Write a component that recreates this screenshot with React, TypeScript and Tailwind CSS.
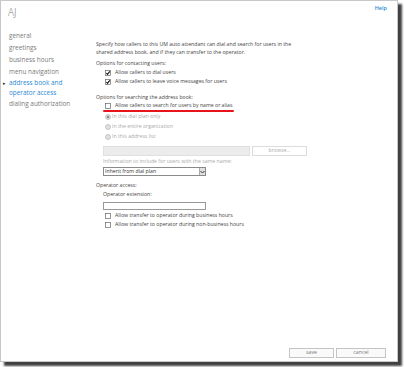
import React from "react";

function Check({ checked = false }: { checked?: boolean }) {
  return (
    <svg width="6" height="6" viewBox="0 0 12 12" className="shrink-0">
      <rect x="1" y="1" width="10" height="10" fill="#fff" stroke="#666" strokeWidth="1.4" />
      {checked && <path d="M2.8 6 L5 8.8 L9.5 2.8" fill="none" stroke="#111" strokeWidth="2.2" />}
    </svg>
  );
}

function Radio({ selected = false }: { selected?: boolean }) {
  return (
    <svg width="6" height="6" viewBox="0 0 12 12" className="shrink-0">
      <circle cx="6" cy="6" r="5" fill="#e2e2e2" stroke="#aaa" strokeWidth="1.2" />
      {selected && <circle cx="6" cy="6" r="2.4" fill="#8a8a8a" />}
    </svg>
  );
}

export default function App() {
  const nav = ["general", "greetings", "business hours", "menu navigation"];
  return (
    <div className="w-[404px] h-[367px] bg-white font-['Open_Sans',sans-serif]">
      <div className="w-[398px] h-[362px] bg-white border border-[#c8c8c8] shadow-[4px_4px_2px_rgba(0,0,0,0.75)] flex flex-col">
        <div className="h-[23px] flex justify-between">
          <div className="pl-[7px] pt-[5px] text-[10px] leading-[12px] text-[#777] font-light">AJ</div>
          <div className="pr-[10px] pt-[4px] text-[5.5px] leading-[7px] text-[#2a8ad4] font-semibold">Help</div>
        </div>
        <div className="flex">
          <div className="w-[95px] pl-[8px] pt-[6px] text-[6.4px] text-[#7a7a7a] shrink-0">
            {nav.map((n) => (
              <div key={n} className="leading-[12px]">{n}</div>
            ))}
            <div className="relative leading-[10px] text-[#2a8ad4]">
              <span className="absolute left-[-6px] top-[0px] text-[5px] text-[#333]">▸</span>
              <div>address book and</div>
              <div>operator access</div>
            </div>
            <div className="leading-[12px]">dialing authorization</div>
          </div>
          <div className="flex flex-col pt-[17px] text-[5.2px] text-[#444]">
            <p className="leading-[7.5px] w-[200px]">
              Specify how callers to this UM auto attendant can dial and search for users in the shared address book, and if they can transfer to the operator.
            </p>
            <div className="h-[8px] mt-[4px] flex items-center">Options for contacting users:</div>
            <div className="h-[9px] pl-[9px] flex items-center gap-[4px]">
              <Check checked />
              <span>Allow callers to dial users</span>
            </div>
            <div className="h-[9px] pl-[9px] flex items-center gap-[4px]">
              <Check checked />
              <span>Allow callers to leave voice messages for users</span>
            </div>
            <div className="h-[8px] mt-[8px] flex items-center">Options for searching the address book:</div>
            <div className="h-[8px] pl-[9px] flex items-center gap-[4px]">
              <Check />
              <span>Allow callers to search for users by name or alias</span>
            </div>
            <div className="h-[2px] w-[131px] ml-[7px] bg-[#e8141c] rounded-full" />
            <div className="h-[10px] pl-[9px] flex items-center gap-[1px] text-[#aaa]">
              <Radio selected />
              <span>In this dial plan only</span>
            </div>
            <div className="h-[10px] pl-[9px] flex items-center gap-[1px] text-[#aaa]">
              <Radio />
              <span>In the entire organization</span>
            </div>
            <div className="h-[10px] pl-[9px] flex items-center gap-[1px] text-[#aaa]">
              <Radio />
              <span>In this address list</span>
            </div>
            <div className="h-[10px] mt-[4px] pl-[7px] flex gap-[2px]">
              <div className="w-[147px] h-[10px] bg-[#ececec] border border-[#e0e0e0]" />
              <div className="w-[55px] h-[10px] border border-[#dcdcdc] bg-white text-[#aaa] flex items-center justify-center">browse...</div>
            </div>
            <div className="h-[8px] mt-[2px] pl-[7px] flex items-center text-[#aaa]">Information to include for users with the same name:</div>
            <div className="h-[9px] mt-[1px] ml-[7px] w-[103px] border border-[#8a8a8a] flex items-center justify-between text-[#333]">
              <span className="pl-[1px]">Inherit from dial plan</span>
              <span className="w-[6px] h-[7px] bg-[#e0e0e0] border-l border-[#aaa] flex items-center justify-center">
                <svg width="5" height="4" viewBox="0 0 10 8">
                  <path d="M1 2 L5 6 L9 2" fill="none" stroke="#333" strokeWidth="2" />
                </svg>
              </span>
            </div>
            <div className="h-[8px] mt-[6px] flex items-center">Operator access:</div>
            <div className="h-[8px] mt-[1px] pl-[7px] flex items-center">Operator extension:</div>
            <div className="h-[8px] mt-[3px] ml-[7px] w-[103px] border border-[#999] bg-white" />
            <div className="h-[9px] mt-[1px] pl-[9px] flex items-center gap-[4px]">
              <Check />
              <span>Allow transfer to operator during business hours</span>
            </div>
            <div className="h-[9px] pl-[9px] flex items-center gap-[4px]">
              <Check />
              <span>Allow transfer to operator during non-business hours</span>
            </div>
          </div>
        </div>
        <div className="mt-auto pb-[3px] pr-[11px] flex justify-end gap-[2px] text-[5.2px] text-[#777]">
          <div className="w-[45px] h-[10px] border border-[#c4c4c4] bg-[#fafafa] flex items-center justify-center">save</div>
          <div className="w-[50px] h-[10px] border border-[#c4c4c4] bg-[#fafafa] flex items-center justify-center">cancel</div>
        </div>
      </div>
    </div>
  );
}
